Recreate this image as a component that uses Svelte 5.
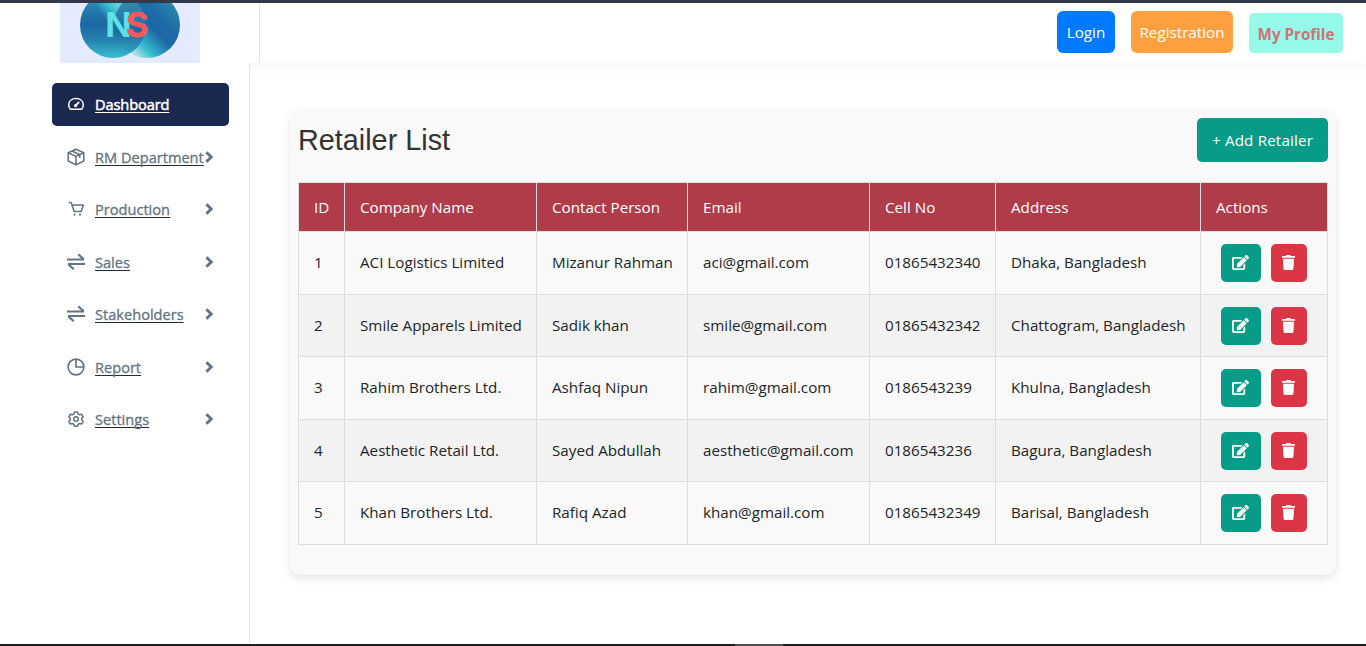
<script>
  const menu = [
    { label: 'Dashboard', icon: 'gauge', active: true },
    { label: 'RM Department', icon: 'box' },
    { label: 'Production', icon: 'cart' },
    { label: 'Sales', icon: 'swap' },
    { label: 'Stakeholders', icon: 'swap' },
    { label: 'Report', icon: 'pie' },
    { label: 'Settings', icon: 'gear' }
  ];
  const columns = ['ID', 'Company Name', 'Contact Person', 'Email', 'Cell No', 'Address', 'Actions'];
  const rows = [
    ['1', 'ACI Logistics Limited', 'Mizanur Rahman', 'aci@gmail.com', '01865432340', 'Dhaka, Bangladesh'],
    ['2', 'Smile Apparels Limited', 'Sadik khan', 'smile@gmail.com', '01865432342', 'Chattogram, Bangladesh'],
    ['3', 'Rahim Brothers Ltd.', 'Ashfaq Nipun', 'rahim@gmail.com', '0186543239', 'Khulna, Bangladesh'],
    ['4', 'Aesthetic Retail Ltd.', 'Sayed Abdullah', 'aesthetic@gmail.com', '0186543236', 'Bagura, Bangladesh'],
    ['5', 'Khan Brothers Ltd.', 'Rafiq Azad', 'khan@gmail.com', '01865432349', 'Barisal, Bangladesh']
  ];
</script>

<div class="page">
  <div class="strip"></div>
  <header>
    <div class="brand">
      <svg class="logo" viewBox="0 0 140 60" width="140" height="60">
        <defs>
          <linearGradient id="left" x1="0" y1="0" x2="0" y2="1">
            <stop offset="0" stop-color="#2f9cbd" />
            <stop offset=".3" stop-color="#2278ab" />
            <stop offset=".5" stop-color="#1c67a3" />
            <stop offset=".73" stop-color="#2583b0" />
            <stop offset="1" stop-color="#39bfd0" />
          </linearGradient>
          <linearGradient id="right" gradientUnits="userSpaceOnUse" x1="73" y1="52" x2="118" y2="5">
            <stop offset="0" stop-color="#c8e8e6" />
            <stop offset=".2" stop-color="#35bfd0" />
            <stop offset=".5" stop-color="#1d68a4" />
            <stop offset=".72" stop-color="#1e6ca5" />
            <stop offset="1" stop-color="#2b88ab" />
          </linearGradient>
          <linearGradient id="lens" gradientUnits="userSpaceOnUse" x1="0" y1="-5" x2="0" y2="55">
            <stop offset="0" stop-color="#3391ae" />
            <stop offset=".3" stop-color="#2a7ca9" />
            <stop offset=".55" stop-color="#1c68a2" />
            <stop offset="1" stop-color="#36b3c7" />
          </linearGradient>
          <linearGradient id="shine" gradientUnits="userSpaceOnUse" x1="40" y1="20" x2="58" y2="2">
            <stop offset="0" stop-color="#1c67a3" stop-opacity="0" />
            <stop offset=".7" stop-color="#35bed0" />
            <stop offset="1" stop-color="#69d1da" />
          </linearGradient>
          <clipPath id="second"><circle cx="87" cy="22" r="33" /></clipPath>
        </defs>
        <rect width="140" height="60" fill="#e4eaff" />
        <circle cx="87" cy="22" r="33" fill="url(#right)" />
        <circle cx="53" cy="22" r="33" fill="url(#left)" />
        <path d="M36 0H64L54 20Q46 20 36 0Z" fill="url(#shine)" />
        <circle cx="53" cy="22" r="33" fill="url(#lens)" clip-path="url(#second)" />
        <text x="45.200" y="34" class="n">N</text>
        <text x="66" y="34" class="s">S</text>
      </svg>
    </div>
    <div class="auth">
      <button class="login">Login</button>
      <button class="registration">Registration</button>
      <button class="profile">My Profile</button>
    </div>
  </header>

  <div class="body">
    <nav>
      {#each menu as item}
        <div class="item" class:active={item.active}>
          <svg class="icon" viewBox="0 0 18 18" width="18" height="18" fill="none" stroke="currentColor" stroke-width="1.500" stroke-linejoin="round">
            {#if item.icon === 'gauge'}
              <path d="M3.400 14.200h11.200c1.200-1.300 1.700-2.800 1.700-4.400C16.300 6 13.200 3.500 9 3.500S1.700 6 1.700 9.800c0 1.600.5 3.100 1.700 4.400Z" />
              <path d="m8.500 10.700 3.600-3.700" stroke-width="1.800" /><circle cx="8.600" cy="10.600" r=".9" fill="currentColor" />
            {:else if item.icon === 'box'}
              <path d="M9 1.200 16.800 4.700v8.300L9 16.900 1.200 13V4.700Z M1.200 4.700 9 8.400l7.800-3.700M9 8.400v8.500M5 3l7.800 3.700v3.400" />
            {:else if item.icon === 'cart'}
              <path d="M1.700 2.600h2.400l3.100 9h7L16.300 5H5" /><circle cx="7.500" cy="14.700" r="1.100" fill="currentColor" stroke="none" /><circle cx="13" cy="14.700" r="1.100" fill="currentColor" stroke="none" />
            {:else if item.icon === 'swap'}
              <path d="M0 6.500h17M11.300 1.300l5.300 5M18 11H1M6.700 16.200l-5.300-5" stroke-width="2.200" />
            {:else if item.icon === 'pie'}
              <circle cx="9" cy="9" r="7.900" stroke-width="1.600" /><path d="M9 1v8h8" stroke-width="1.600" />
            {:else}
              <path d="M7.500 2h3l.6 2 1.500.8 2.100-.5 1.500 2.600-1.500 1.500v1.400l1.500 1.500-1.500 2.600-2.100-.5-1.500.8-.6 2h-3l-.6-2-1.500-.8-2.100.5-1.500-2.600 1.500-1.500V8.400L1.800 6.900l1.500-2.600 2.100.5L6.900 4Z" />
              <circle cx="9" cy="9.100" r="2.300" />
            {/if}
          </svg>
          <a href="#top">{item.label}</a>
          {#if !item.active}
            <svg class="chevron" viewBox="0 0 9 12" width="9" height="12"><path d="m1.400 1.200 4.800 4.800-4.800 4.800" fill="none" stroke="currentColor" stroke-width="3" /></svg>
          {/if}
        </div>
      {/each}
    </nav>

    <main>
      <section>
        <div class="title">
          <h2>Retailer List</h2>
          <button class="add">+ Add Retailer</button>
        </div>
        <table>
          <colgroup><col class="c1" /><col class="c2" /><col class="c3" /><col class="c4" /><col class="c5" /><col class="c6" /><col class="c7" /></colgroup>
          <thead><tr>{#each columns as c}<th>{c}</th>{/each}</tr></thead>
          <tbody>
            {#each rows as row}
              <tr>
                {#each row as cell}<td>{cell}</td>{/each}
                <td class="actions">
                  <div>
                    <button class="edit" aria-label="Edit">
                      <svg viewBox="0 0 576 512" width="17" height="15"><path fill="currentColor" d="M402.600 83.200l90.200 90.200c3.800 3.800 3.800 10 0 13.800L274.400 405.600l-92.800 10.300c-12.400 1.400-22.900-9.100-21.500-21.500l10.300-92.800L388.800 83.200c3.800-3.800 10-3.800 13.800 0zm162-22.900l-48.800-48.800c-15.200-15.200-39.900-15.200-55.200 0l-35.400 35.400c-3.800 3.800-3.800 10 0 13.800l90.200 90.200c3.800 3.800 10 3.800 13.800 0l35.400-35.400c15.200-15.300 15.200-40 0-55.200zM384 346.200V448H64V128h229.800c3.200 0 6.200-1.300 8.500-3.500l40-40c7.600-7.600 2.200-20.500-8.500-20.500H48C21.500 64 0 85.500 0 112v352c0 26.500 21.500 48 48 48h352c26.500 0 48-21.500 48-48V306.200c0-10.700-12.900-16-20.500-8.500l-40 40c-2.200 2.300-3.500 5.300-3.500 8.500z" /></svg>
                    </button>
                    <button class="delete" aria-label="Delete">
                      <svg viewBox="0 0 448 512" width="13" height="15"><path fill="currentColor" d="M432 32H312l-9.400-18.700A24 24 0 0 0 281.100 0H166.800a23.700 23.700 0 0 0-21.400 13.300L136 32H16A16 16 0 0 0 0 48v32a16 16 0 0 0 16 16h416a16 16 0 0 0 16-16V48a16 16 0 0 0-16-16zM53.200 467a48 48 0 0 0 47.900 45h245.800a48 48 0 0 0 47.900-45L416 128H32z" /></svg>
                    </button>
                  </div>
                </td>
              </tr>
            {/each}
          </tbody>
        </table>
      </section>
    </main>
  </div>
  <footer><span></span></footer>
</div>

<style>
  :global(body) { margin: 0; background: #fff; overflow: hidden; }
  * { box-sizing: border-box; }
  .page { width: 1366px; height: 646px; display: flex; flex-direction: column; font: 15.2px/24px "Open Sans", "Noto Sans", sans-serif; color: #212529; }
  .strip { height: 3px; background: #353a4a; flex: none; }
  header { height: 60px; flex: none; display: flex; justify-content: space-between; box-shadow: 0 2px 15px rgba(0, 0, 0, .05); }
  .brand { width: 260px; padding-left: 60px; border-right: 1px solid #e7e7e9; }
  .logo { display: block; }
  .logo text { font: 600 36px Inter, sans-serif; }
  .logo .n { fill: #5ce1e6; font-size: 34.5px; font-weight: 700; }
  .logo .s { fill: #ff5757; stroke: #ff5757; stroke-width: .7px; font-size: 34.5px; }
  .auth { display: flex; gap: 16px; align-items: flex-end; padding: 0 23px 10px 0; }
  button { font: inherit; border: 0; padding: 0; color: #fff; border-radius: 5px; white-space: nowrap; }
  .auth button { height: 42px; border-radius: 6px; }
  .auth .login { width: 58px; background: #007bff; }
  .auth .registration { width: 102px; background: #ffa040; }
  .auth .profile { width: 94px; height: 40px; padding-top: 1px; background: #96fae9; color: #cc7478; font-weight: 700; border-radius: 5px; font-size: 15.2px; }
  .body { flex: 1; min-height: 0; display: flex; }
  nav { width: 250px; background: #fff; border-right: 1px solid #e7e7e9; padding: 20px 20px 0 52px; display: flex; flex-direction: column; gap: 10px; position: relative; }
  .item { height: 42.5px; display: flex; align-items: center; padding: 0 15px; color: #637381; border-radius: 5px; flex: none; }
  .item.active { background: #1b2850; color: #fff; }
  .icon { flex: none; margin-right: 10px; }
  .item a { color: inherit; font-size: 14.6px; -webkit-text-stroke: .3px currentColor; padding-top: .4px; white-space: nowrap; text-decoration: underline; text-decoration-color: #212b36; text-decoration-thickness: 1px; text-underline-offset: 2px; text-decoration-skip-ink: none; }
  .item.active a { text-decoration-color: #fff; -webkit-text-stroke-width: .5px; letter-spacing: -.1px; }
  .chevron { margin-left: auto; flex: none; }
  main { flex: 1; padding: 46px 30px 0 40px; }
  section { width: 1046px; height: 466px; background: #f9f9f9; border-radius: 10px; padding: 9px 8px 0; box-shadow: 0 4px 8px rgba(0, 0, 0, .1); }
  .title { display: flex; justify-content: space-between; height: 64px; }
  h2 { margin: 5px 0 0; font: 400 28.8px/34px "Liberation Sans", Arial, sans-serif; color: #333; }
  .add { width: 131px; height: 44px; background: #069c88; letter-spacing: .15px; }
  table { width: 1030px; table-layout: fixed; border-collapse: separate; border-spacing: 0; border: solid #dcdedf; border-width: 1px 0 0 1px; }
  .c1 { width: 46px; } .c2 { width: 192px; } .c3 { width: 151px; } .c4 { width: 182px; } .c5 { width: 126px; } .c6 { width: 205px; } .c7 { width: 127px; }
  th, td { border: solid #dcdedf; border-width: 0 1px 1px 0; padding: 0 0 0 15px; text-align: left; white-space: nowrap; font-weight: 400; vertical-align: middle; }
  th { background: #b03c4a; color: #fff; height: 49px; }
  td { height: 63px; padding-bottom: 2px; }
  tbody tr:nth-child(even) td { height: 62px; background: #f2f2f2; }
  td.actions { padding: 0 0 0 20px; }
  .actions div { display: flex; gap: 10px; }
  .actions button { height: 38px; display: flex; align-items: center; justify-content: center; padding: 0 1px 1px 0; }
  .edit { width: 40px; background: #069c88; }
  .delete { width: 36px; background: #dc3545; }
  footer { height: 2px; flex: none; background: #1c1e24; display: flex; padding-left: 735px; }
  footer span { width: 48px; background: #4f4f50; }
</style>
